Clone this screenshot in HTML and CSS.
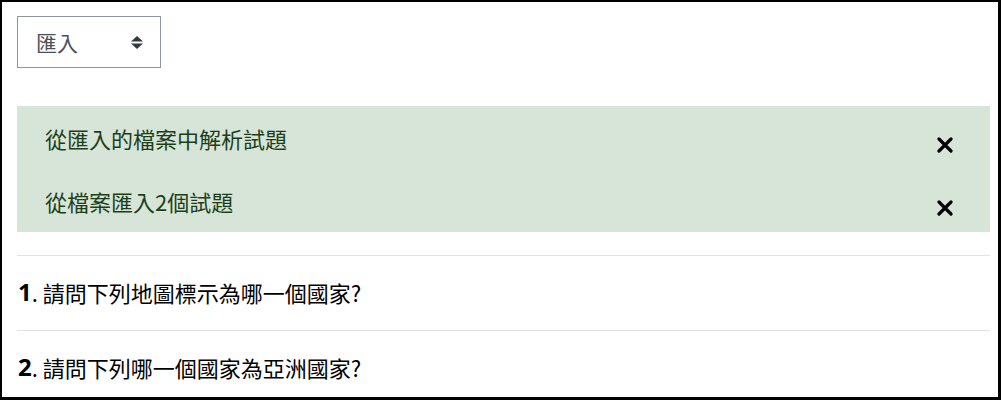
FILE: index.html
```html
<!DOCTYPE html>
<html lang="zh-Hant">
<head>
<meta charset="utf-8">
<title>匯入</title>
<link rel="stylesheet" href="styles.css">
</head>
<body>
<div class="page">
  <div class="select">
    <span class="select-label">匯入</span>
    <svg class="select-arrows" width="12" height="13" viewBox="0 0 12 13" aria-hidden="true">
      <path d="M0 5.5 L6 0 L12 5.5 Z" fill="#343a40"/>
      <path d="M0 7.5 L6 13 L12 7.5 Z" fill="#343a40"/>
    </svg>
  </div>

  <div class="alerts">
    <div class="alert">
      <span class="alert-text">從匯入的檔案中解析試題</span>
      <button class="alert-close" type="button" aria-label="關閉">
        <svg width="16" height="16" viewBox="0 0 16 16" aria-hidden="true">
          <path d="M2 2 L14 14 M14 2 L2 14" stroke="#000" stroke-width="3.2" stroke-linecap="round"/>
        </svg>
      </button>
    </div>
    <div class="alert">
      <span class="alert-text">從檔案匯入2個試題</span>
      <button class="alert-close" type="button" aria-label="關閉">
        <svg width="16" height="16" viewBox="0 0 16 16" aria-hidden="true">
          <path d="M2 2 L14 14 M14 2 L2 14" stroke="#000" stroke-width="3.2" stroke-linecap="round"/>
        </svg>
      </button>
    </div>
  </div>

  <ol class="questions">
    <li class="question"><b class="qnum">1</b>. 請問下列地圖標示為哪一個國家?</li>
    <li class="question"><b class="qnum">2</b>. 請問下列哪一個國家為亞洲國家?</li>
  </ol>
</div>
</body>
</html>
```

FILE: styles.css
```css
html, body {
  margin: 0;
  padding: 0;
  background: #fff;
}

body {
  font-family: "Noto Sans", "Noto Sans CJK TC", sans-serif;
  color: #1d2125;
}

.page {
  box-sizing: border-box;
  width: 1001px;
  height: 400px;
  overflow: hidden;
  border-style: solid;
  border-color: #000;
  border-width: 2px 3px 3px 2px;
  padding: 14px 8px 0 15px;
}

.select {
  box-sizing: border-box;
  width: 144px;
  height: 52px;
  border: 1px solid #8f959e;
  display: flex;
  align-items: center;
  justify-content: space-between;
  padding: 0 17px 0 18px;
  font-size: 21px;
  color: #495057;
}

.select-label {
  font-family: "Noto Sans CJK TC", sans-serif;
  line-height: 1;
}

.alerts {
  margin-top: 38px;
  background: #d7e5d8;
}

.alert {
  box-sizing: border-box;
  height: 63px;
  display: flex;
  align-items: center;
  justify-content: space-between;
  padding: 0 37px 0 28px;
  color: #1c3f1a;
  font-family: "Noto Sans CJK TC", sans-serif;
  font-size: 22px;
}

.alert-text {
  line-height: 1;
  margin-top: 0;
}

.alert-close {
  border: 0;
  background: transparent;
  padding: 0;
  margin-top: 14px;
  width: 16px;
  height: 16px;
  display: flex;
}

.questions {
  list-style: none;
  margin: 23px 0 0 0;
  padding: 0;
}

.question {
  box-sizing: border-box;
  height: 75px;
  border-top: 1px solid #e2e2e2;
  display: flex;
  align-items: center;
  padding: 0 0 3px 1px;
  font-family: "Noto Sans CJK TC", sans-serif;
  font-size: 22px;
  color: #000;
  white-space: pre;
}

.qnum {
  font-family: "Noto Sans", sans-serif;
  font-weight: 700;
  font-size: 24px;
}
```
